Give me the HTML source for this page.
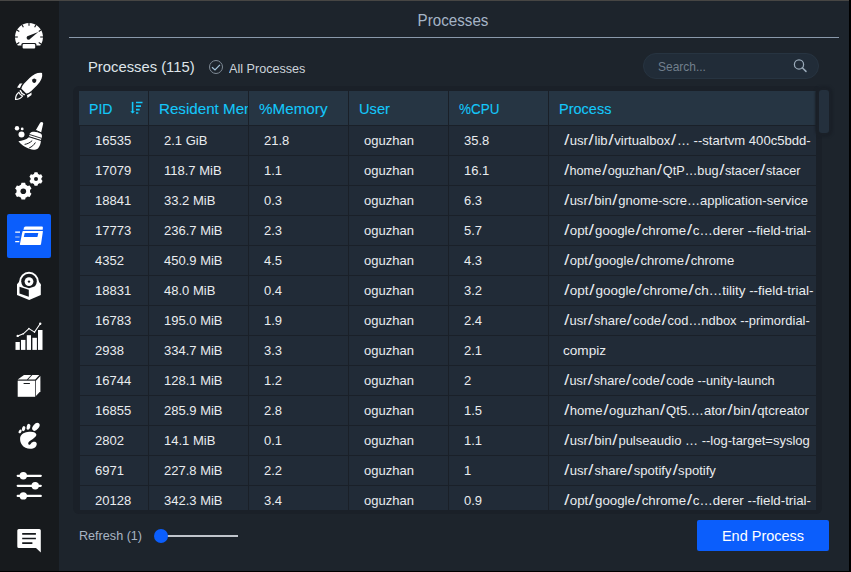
<!DOCTYPE html>
<html><head><meta charset="utf-8">
<style>
html,body{margin:0;padding:0;}
body{width:851px;height:572px;position:relative;overflow:hidden;background:#000;font-family:"Liberation Sans",sans-serif;}
.a{position:absolute;}
#topb{left:0;top:0;width:849px;height:1px;background:#474644;}
#side{left:0;top:1px;width:59px;height:570px;background:#171a1d;}
#main{left:59px;top:1px;width:790px;height:570px;background:#1d242c;}
#title{left:358px;top:11px;width:190px;text-align:center;color:#a5b4c6;font-size:17px;line-height:20px;transform:scaleX(0.892);}
#hline{left:69px;top:37px;width:770px;height:1px;background:#8a99ab;}
#plabel{left:88px;top:58px;color:#dfe5ea;font-size:14.8px;line-height:18px;white-space:nowrap;transform-origin:0 0;}
#chk{left:209px;top:60px;width:12px;height:12px;border:1px solid #7f8a95;border-radius:50%;}
#alltxt{left:229px;top:61px;color:#ccd3da;font-size:13px;line-height:16px;white-space:nowrap;transform:scaleX(0.97);transform-origin:0 0;}
#search{left:643px;top:53px;width:174px;height:24px;border:1px solid #273441;border-radius:13px;background:#212c38;}
#stxt{left:658px;top:59px;color:#717f8d;font-size:13.3px;line-height:16px;transform:scaleX(0.9);transform-origin:0 0;}
#frame{left:73px;top:86px;width:749px;height:428px;border-radius:6px;background:#1a2028;}
.hc{position:absolute;top:91px;height:34px;background:#263543;overflow:hidden;}
.hc span{position:absolute;left:10px;top:9px;font-size:14.5px;line-height:18px;color:#14c8fa;white-space:nowrap;-webkit-text-stroke:0.1px #14c8fa;}
.rc{position:absolute;background:#212b37;overflow:hidden;}
.rc span{position:absolute;left:15px;top:6px;font-size:13px;line-height:17px;color:#e9ecef;white-space:nowrap;}
.rc i.sl{font-style:normal;margin:0 1.5px;display:inline-block;transform:scale(1.4,1.15);transform-origin:50% 62%;}
#sbh{left:819px;top:90px;width:10px;height:43px;border-radius:3px;background:#24303d;box-shadow:0 0 2px 4px #1a2028;}
#rtxt{left:79px;top:527px;color:#a9b5c3;font-size:13px;line-height:17px;white-space:nowrap;transform:scaleX(0.97);transform-origin:0 0;}
#track{left:161px;top:535px;width:77px;height:2px;background:#c0c5cc;}
#knob{left:154px;top:529px;width:14px;height:14px;border-radius:50%;background:#0b5efc;}
#btn{left:697px;top:520px;width:132px;height:31px;border-radius:2px;background:#0b5efc;color:#fff;font-size:14.5px;line-height:33px;text-align:center;}
</style></head><body>
<div class="a" id="topb"></div>
<div class="a" id="side"></div>
<div class="a" id="main"></div>
<div class="a" id="title">Processes</div>
<div class="a" id="hline"></div>
<div class="a" id="plabel">Processes (115)</div>
<div class="a" id="chk"></div>
<svg class="a" style="left:0;top:0" width="851" height="572" viewBox="0 0 851 572">
<path d="M212 67.2 L215 70 L219.9 64.9" fill="none" stroke="#a5c4da" stroke-width="1.2"/>
</svg>
<div class="a" id="alltxt">All Processes</div>
<div class="a" id="search"></div>
<div class="a" id="stxt">Search...</div>
<svg class="a" style="left:0;top:0" width="851" height="572" viewBox="0 0 851 572">
<circle cx="799" cy="64.4" r="4.6" fill="none" stroke="#9aaab9" stroke-width="1.25"/>
<path d="M802.3 67.7 L806 71.4" stroke="#9aaab9" stroke-width="1.5" stroke-linecap="round"/>
</svg>
<div class="a" id="frame"></div>
<div class="hc" style="left:79px;width:69px"><span style="transform:scaleX(0.97);transform-origin:0 0">PID</span></div>
<div class="hc" style="left:149px;width:99px"><span style="transform:scaleX(1.045);transform-origin:0 0">Resident Memory</span></div>
<div class="hc" style="left:249px;width:99px"><span style="transform:scaleX(1.05);transform-origin:0 0">%Memory</span></div>
<div class="hc" style="left:349px;width:99px"><span style="transform:scaleX(1.01);transform-origin:0 0">User</span></div>
<div class="hc" style="left:449px;width:99px"><span style="transform:scaleX(0.93);transform-origin:0 0">%CPU</span></div>
<div class="hc" style="left:549px;width:267px"><span style="transform:scaleX(1.0);transform-origin:0 0">Process</span></div>
<div class="rc" style="left:80px;top:126px;width:68px;height:29px"><span>16535</span></div>
<div class="rc" style="left:149px;top:126px;width:99px;height:29px"><span>2.1 GiB</span></div>
<div class="rc" style="left:249px;top:126px;width:99px;height:29px"><span>21.8</span></div>
<div class="rc" style="left:349px;top:126px;width:99px;height:29px"><span>oguzhan</span></div>
<div class="rc" style="left:449px;top:126px;width:99px;height:29px"><span>35.8</span></div>
<div class="rc" style="left:549px;top:126px;width:267px;height:29px"><span style="left:14px;transform:scaleX(1.0061);transform-origin:0 0"><i class="sl">/</i>usr<i class="sl">/</i>lib<i class="sl">/</i>virtualbox<i class="sl">/</i>… --startvm 400c5bdd-</span></div>
<div class="rc" style="left:80px;top:156px;width:68px;height:29px"><span>17079</span></div>
<div class="rc" style="left:149px;top:156px;width:99px;height:29px"><span>118.7 MiB</span></div>
<div class="rc" style="left:249px;top:156px;width:99px;height:29px"><span>1.1</span></div>
<div class="rc" style="left:349px;top:156px;width:99px;height:29px"><span>oguzhan</span></div>
<div class="rc" style="left:449px;top:156px;width:99px;height:29px"><span>16.1</span></div>
<div class="rc" style="left:549px;top:156px;width:267px;height:29px"><span style="left:14px;transform:scaleX(0.9757);transform-origin:0 0"><i class="sl">/</i>home<i class="sl">/</i>oguzhan<i class="sl">/</i>QtP…bug<i class="sl">/</i>stacer<i class="sl">/</i>stacer</span></div>
<div class="rc" style="left:80px;top:186px;width:68px;height:29px"><span>18841</span></div>
<div class="rc" style="left:149px;top:186px;width:99px;height:29px"><span>33.2 MiB</span></div>
<div class="rc" style="left:249px;top:186px;width:99px;height:29px"><span>0.3</span></div>
<div class="rc" style="left:349px;top:186px;width:99px;height:29px"><span>oguzhan</span></div>
<div class="rc" style="left:449px;top:186px;width:99px;height:29px"><span>6.3</span></div>
<div class="rc" style="left:549px;top:186px;width:267px;height:29px"><span style="left:14px;transform:scaleX(1.0012);transform-origin:0 0"><i class="sl">/</i>usr<i class="sl">/</i>bin<i class="sl">/</i>gnome-scre…application-service</span></div>
<div class="rc" style="left:80px;top:216px;width:68px;height:29px"><span>17773</span></div>
<div class="rc" style="left:149px;top:216px;width:99px;height:29px"><span>236.7 MiB</span></div>
<div class="rc" style="left:249px;top:216px;width:99px;height:29px"><span>2.3</span></div>
<div class="rc" style="left:349px;top:216px;width:99px;height:29px"><span>oguzhan</span></div>
<div class="rc" style="left:449px;top:216px;width:99px;height:29px"><span>5.7</span></div>
<div class="rc" style="left:549px;top:216px;width:267px;height:29px"><span style="left:14px;transform:scaleX(1.0224);transform-origin:0 0"><i class="sl">/</i>opt<i class="sl">/</i>google<i class="sl">/</i>chrome<i class="sl">/</i>c…derer --field-trial-</span></div>
<div class="rc" style="left:80px;top:246px;width:68px;height:29px"><span>4352</span></div>
<div class="rc" style="left:149px;top:246px;width:99px;height:29px"><span>450.9 MiB</span></div>
<div class="rc" style="left:249px;top:246px;width:99px;height:29px"><span>4.5</span></div>
<div class="rc" style="left:349px;top:246px;width:99px;height:29px"><span>oguzhan</span></div>
<div class="rc" style="left:449px;top:246px;width:99px;height:29px"><span>4.3</span></div>
<div class="rc" style="left:549px;top:246px;width:267px;height:29px"><span style="left:14px;transform:scaleX(1.0053);transform-origin:0 0"><i class="sl">/</i>opt<i class="sl">/</i>google<i class="sl">/</i>chrome<i class="sl">/</i>chrome</span></div>
<div class="rc" style="left:80px;top:276px;width:68px;height:29px"><span>18831</span></div>
<div class="rc" style="left:149px;top:276px;width:99px;height:29px"><span>48.0 MiB</span></div>
<div class="rc" style="left:249px;top:276px;width:99px;height:29px"><span>0.4</span></div>
<div class="rc" style="left:349px;top:276px;width:99px;height:29px"><span>oguzhan</span></div>
<div class="rc" style="left:449px;top:276px;width:99px;height:29px"><span>3.2</span></div>
<div class="rc" style="left:549px;top:276px;width:267px;height:29px"><span style="left:14px;transform:scaleX(1.0357);transform-origin:0 0"><i class="sl">/</i>opt<i class="sl">/</i>google<i class="sl">/</i>chrome<i class="sl">/</i>ch…tility --field-trial-</span></div>
<div class="rc" style="left:80px;top:306px;width:68px;height:29px"><span>16783</span></div>
<div class="rc" style="left:149px;top:306px;width:99px;height:29px"><span>195.0 MiB</span></div>
<div class="rc" style="left:249px;top:306px;width:99px;height:29px"><span>1.9</span></div>
<div class="rc" style="left:349px;top:306px;width:99px;height:29px"><span>oguzhan</span></div>
<div class="rc" style="left:449px;top:306px;width:99px;height:29px"><span>2.4</span></div>
<div class="rc" style="left:549px;top:306px;width:267px;height:29px"><span style="left:14px;transform:scaleX(0.9935);transform-origin:0 0"><i class="sl">/</i>usr<i class="sl">/</i>share<i class="sl">/</i>code<i class="sl">/</i>cod…ndbox --primordial-</span></div>
<div class="rc" style="left:80px;top:336px;width:68px;height:29px"><span>2938</span></div>
<div class="rc" style="left:149px;top:336px;width:99px;height:29px"><span>334.7 MiB</span></div>
<div class="rc" style="left:249px;top:336px;width:99px;height:29px"><span>3.3</span></div>
<div class="rc" style="left:349px;top:336px;width:99px;height:29px"><span>oguzhan</span></div>
<div class="rc" style="left:449px;top:336px;width:99px;height:29px"><span>2.1</span></div>
<div class="rc" style="left:549px;top:336px;width:267px;height:29px"><span style="left:14px;transform:scaleX(1.0450);transform-origin:0 0">compiz</span></div>
<div class="rc" style="left:80px;top:366px;width:68px;height:29px"><span>16744</span></div>
<div class="rc" style="left:149px;top:366px;width:99px;height:29px"><span>128.1 MiB</span></div>
<div class="rc" style="left:249px;top:366px;width:99px;height:29px"><span>1.2</span></div>
<div class="rc" style="left:349px;top:366px;width:99px;height:29px"><span>oguzhan</span></div>
<div class="rc" style="left:449px;top:366px;width:99px;height:29px"><span>2</span></div>
<div class="rc" style="left:549px;top:366px;width:267px;height:29px"><span style="left:14px;transform:scaleX(0.9808);transform-origin:0 0"><i class="sl">/</i>usr<i class="sl">/</i>share<i class="sl">/</i>code<i class="sl">/</i>code --unity-launch</span></div>
<div class="rc" style="left:80px;top:396px;width:68px;height:29px"><span>16855</span></div>
<div class="rc" style="left:149px;top:396px;width:99px;height:29px"><span>285.9 MiB</span></div>
<div class="rc" style="left:249px;top:396px;width:99px;height:29px"><span>2.8</span></div>
<div class="rc" style="left:349px;top:396px;width:99px;height:29px"><span>oguzhan</span></div>
<div class="rc" style="left:449px;top:396px;width:99px;height:29px"><span>1.5</span></div>
<div class="rc" style="left:549px;top:396px;width:267px;height:29px"><span style="left:14px;transform:scaleX(1.0074);transform-origin:0 0"><i class="sl">/</i>home<i class="sl">/</i>oguzhan<i class="sl">/</i>Qt5.…ator<i class="sl">/</i>bin<i class="sl">/</i>qtcreator</span></div>
<div class="rc" style="left:80px;top:426px;width:68px;height:29px"><span>2802</span></div>
<div class="rc" style="left:149px;top:426px;width:99px;height:29px"><span>14.1 MiB</span></div>
<div class="rc" style="left:249px;top:426px;width:99px;height:29px"><span>0.1</span></div>
<div class="rc" style="left:349px;top:426px;width:99px;height:29px"><span>oguzhan</span></div>
<div class="rc" style="left:449px;top:426px;width:99px;height:29px"><span>1.1</span></div>
<div class="rc" style="left:549px;top:426px;width:267px;height:29px"><span style="left:14px;transform:scaleX(1.0016);transform-origin:0 0"><i class="sl">/</i>usr<i class="sl">/</i>bin<i class="sl">/</i>pulseaudio … --log-target=syslog</span></div>
<div class="rc" style="left:80px;top:456px;width:68px;height:29px"><span>6971</span></div>
<div class="rc" style="left:149px;top:456px;width:99px;height:29px"><span>227.8 MiB</span></div>
<div class="rc" style="left:249px;top:456px;width:99px;height:29px"><span>2.2</span></div>
<div class="rc" style="left:349px;top:456px;width:99px;height:29px"><span>oguzhan</span></div>
<div class="rc" style="left:449px;top:456px;width:99px;height:29px"><span>1</span></div>
<div class="rc" style="left:549px;top:456px;width:267px;height:29px"><span style="left:14px;transform:scaleX(1.0039);transform-origin:0 0"><i class="sl">/</i>usr<i class="sl">/</i>share<i class="sl">/</i>spotify<i class="sl">/</i>spotify</span></div>
<div class="rc" style="left:80px;top:486px;width:68px;height:24px"><span>20128</span></div>
<div class="rc" style="left:149px;top:486px;width:99px;height:24px"><span>342.3 MiB</span></div>
<div class="rc" style="left:249px;top:486px;width:99px;height:24px"><span>3.4</span></div>
<div class="rc" style="left:349px;top:486px;width:99px;height:24px"><span>oguzhan</span></div>
<div class="rc" style="left:449px;top:486px;width:99px;height:24px"><span>0.9</span></div>
<div class="rc" style="left:549px;top:486px;width:267px;height:24px"><span style="left:14px;transform:scaleX(1.0224);transform-origin:0 0"><i class="sl">/</i>opt<i class="sl">/</i>google<i class="sl">/</i>chrome<i class="sl">/</i>c…derer --field-trial-</span></div>
<svg class="a" style="left:124px;top:96px" width="24" height="24" viewBox="0 0 24 24">
<path d="M8.6 5.9 V16.5" stroke="#14c8fa" stroke-width="1.6"/>
<path d="M6.3 15.2 L8.6 17.6 L10.9 15.2 Z" fill="#14c8fa"/>
<path d="M12 6.5 H18.5 M12 10.1 H17 M12 13.6 H15.7 M12 17 H14.3" stroke="#14c8fa" stroke-width="1.6"/>
</svg>
<div class="a" id="sbh"></div>
<div class="a" id="rtxt">Refresh (1)</div>
<div class="a" id="track"></div>
<div class="a" id="knob"></div>
<div class="a" id="btn">End Process</div>

<svg class="a" style="left:0;top:0" width="59" height="572" viewBox="0 0 59 572">
<g fill="#fff">
<!-- gauge -->
<path d="M17.8 45.4 A14 14 0 1 1 40.2 45.4 Z"/>
<g stroke="#171a1d" stroke-width="1.1">
<path d="M29 23 V25.8"/>
<path d="M22 24.9 L23.4 27.3"/><path d="M36 24.9 L34.6 27.3"/>
<path d="M16.9 30 L19.3 31.4"/><path d="M41.1 30 L38.7 31.4"/>
<path d="M15 37 H17.8"/><path d="M43 37 H40.2"/>
<path d="M16.9 44 L19.3 42.6"/><path d="M41.1 44 L38.7 42.6"/>
</g>
<path d="M27.3 36.3 L38.3 32.1 L29.6 39.2 Z" fill="#171a1d"/>
<circle cx="28.5" cy="37.8" r="1.9" fill="#171a1d"/>
<rect x="21.4" y="43" width="15" height="6.6" rx="1.5" fill="#171a1d"/>
<rect x="22.6" y="44.1" width="12.6" height="4.3" rx="1"/>
<!-- rocket -->
<path d="M17 87.4 L19.8 83.4 L22.8 83.4 L20 88 Z"/>
<path d="M27.5 97.9 L31.5 95.1 L31.5 92.1 L26.9 94.9 Z"/>
<g transform="translate(29 86) rotate(45)">
<path d="M0 -19.4 C3 -17.5 5.8 -13 5.9 -6 L5.9 2 Q5.8 5 4 8 L-4 8 Q-5.8 5 -5.9 2 L-5.9 -6 C-5.8 -13 -3 -17.5 0 -19.4 Z" stroke="#171a1d" stroke-width="1.4"/>
<circle cx="0" cy="-7.4" r="2.1" fill="#171a1d"/>
<path d="M-3.3 9.3 Q0 10.9 3.3 9.3" stroke="#fff" stroke-width="1.4" fill="none"/>
<path d="M-2.6 11.6 C-3.2 14.5 -1.5 17.5 0 19 C1.5 17.5 3.2 14.5 2.6 11.6 Q0 12.9 -2.6 11.6 Z" fill="#171a1d" stroke="#fff" stroke-width="1.2"/>
</g>
<!-- broom -->
<circle cx="21.5" cy="134.5" r="3"/>
<circle cx="17" cy="128.2" r="2.2"/>
<circle cx="22.2" cy="128.9" r="1.4"/>
<path d="M40.3 122.6 Q41.6 121.3 42.9 122.5 Q43.4 123.2 43.1 124.1 L41.1 132.8 L35.6 130.4 Z"/>
<path d="M29.2 136.6 C29.1 134.2 30 132.8 31.6 132.1 C34 131.1 38 131.8 40.8 133.6 C41.9 134.5 42.3 136 41.8 137.5 L40.9 140.3 Z"/>
<path d="M35.3 130.2 L41.5 132.9" stroke="#171a1d" stroke-width="1"/>
<path d="M29.2 134.4 L41.8 138.4 M28.9 136.7 L41.2 140.5" stroke="#171a1d" stroke-width="0.9"/>
<path d="M28.9 137.2 L40.9 141 C40.7 143.8 39.8 146.2 38 148.4 C36 149.9 33 150.1 30 149.1 C26.5 147.9 23 145.6 20.5 143.4 C19.6 142.6 18.9 141.9 18.4 141.2 C22 140.9 26 139.7 28.9 137.2 Z"/>
<path d="M32.2 140.6 C30.2 142.6 27.6 143.9 24.6 144.4 M35.4 142.5 C33.9 145 31.8 146.9 29.2 147.9" stroke="#171a1d" stroke-width="1" fill="none"/>
<!-- gears -->
<path d="M20.90 184.84L21.50 182.79L25.10 182.79L25.70 184.84A6.8 6.8 0 0 1 27.61 185.94L27.61 185.94L29.68 185.44L31.48 188.55L30.01 190.10A6.8 6.8 0 0 1 30.01 192.30L30.01 192.30L31.48 193.85L29.68 196.96L27.61 196.46A6.8 6.8 0 0 1 25.70 197.56L25.70 197.56L25.10 199.61L21.50 199.61L20.90 197.56A6.8 6.8 0 0 1 18.99 196.46L18.99 196.46L16.92 196.96L15.12 193.85L16.59 192.30A6.8 6.8 0 0 1 16.59 190.10L16.59 190.10L15.12 188.55L16.92 185.44L18.99 185.94A6.8 6.8 0 0 1 20.90 184.84Z" fill-rule="evenodd"/>
<circle cx="23.3" cy="191.2" r="2.8" fill="#171a1d"/>
<path d="M33.95 173.90L34.55 172.15L37.45 172.15L38.05 173.90A5.4 5.4 0 0 1 39.30 174.63L39.30 174.63L41.12 174.27L42.57 176.78L41.35 178.18A5.4 5.4 0 0 1 41.35 179.62L41.35 179.62L42.57 181.02L41.12 183.53L39.30 183.17A5.4 5.4 0 0 1 38.05 183.90L38.05 183.90L37.45 185.65L34.55 185.65L33.95 183.90A5.4 5.4 0 0 1 32.70 183.17L32.70 183.17L30.88 183.53L29.43 181.02L30.65 179.62A5.4 5.4 0 0 1 30.65 178.18L30.65 178.18L29.43 176.78L30.88 174.27L32.70 174.63A5.4 5.4 0 0 1 33.95 173.90Z"/>
<circle cx="36" cy="178.9" r="2.0" fill="#171a1d"/>
<!-- processes active -->
<rect x="7" y="214" width="44" height="44" rx="2" fill="#0b5efc"/>
<path d="M23.4 229.8 L24.1 227.6 Q24.5 226.5 25.9 226.5 L41.8 226.5 Q43 226.5 42.9 227.8 L42.7 229.8 Z"/>
<path d="M23.2 231.1 L42.6 231.1 Q43 231.1 42.9 231.6 L41 244.2 Q40.9 245 40 245 L20.6 245 Q19.8 245 19.9 244.2 L22.4 231.8 Q22.5 231.1 23.2 231.1 Z"/>
<path d="M24.7 233.1 L38.3 233.1 L37.4 237 L23.8 237 Z" fill="#0b5efc"/>
<path d="M15.2 232.2 H20 M15.2 241.7 H19.3" stroke="#fff" stroke-width="1.2"/>
<path d="M15.2 237 H19.6" stroke="#9dbcf0" stroke-width="1.2"/>
<!-- uninstaller -->
<circle cx="29" cy="281.6" r="9.8"/>
<path d="M17 286 L17 284.6 Q17.2 283.5 18.2 282.9 L20.5 279.5 L29 282 L37.5 279.5 L39.8 282.9 Q40.8 283.5 40.8 284.6 L40.8 286 Z"/>
<circle cx="29" cy="281.6" r="7.8" fill="#171a1d"/>
<circle cx="29" cy="281.6" r="4.4"/>
<circle cx="29" cy="281.6" r="1.2" fill="#171a1d"/>
<path d="M17 284.6 L29 288.2 L40.8 284.6 L40.8 295 L29.2 299.9 L17 295 Z"/>
<path d="M19.5 286.8 L28.8 289.7 L28.8 296.8 L19.5 293.5 Z" fill="#171a1d"/>
<!-- chart -->
<rect x="15.5" y="342" width="4.3" height="7.9"/>
<rect x="21" y="339.9" width="4.4" height="10"/>
<rect x="26.8" y="335.2" width="4.2" height="14.7"/>
<rect x="32.4" y="337.8" width="4.5" height="12.1"/>
<rect x="38" y="330" width="4.5" height="19.9"/>
<path d="M17.7 335.9 L23.3 333.8 L28.9 328.6 L34.5 332.1 L40.2 323.8" fill="none" stroke="#fff" stroke-width="1.1"/>
<circle cx="17.7" cy="335.9" r="1.2"/><circle cx="23.3" cy="333.8" r="0.8"/><circle cx="28.9" cy="328.6" r="0.8"/><circle cx="34.5" cy="332.1" r="0.8"/><circle cx="40.2" cy="323.8" r="1.2"/>
<!-- box -->
<rect x="17.7" y="380.7" width="17.5" height="16.1"/>
<path d="M17.7 379.6 L24 375 L31.2 375 L27 379.6 Z"/>
<path d="M28.1 379.6 L32.3 375 L39.4 375 L35.2 379.6 Z"/>
<path d="M35.9 380.7 L40.4 376.1 L40.4 391.2 L35.9 396 Z"/>
<path d="M23.6 383.5 H29.9" stroke="#171a1d" stroke-width="1"/>
<!-- gnome foot -->
<ellipse cx="35.9" cy="426.8" rx="4.6" ry="2.8" transform="rotate(-50 35.9 426.8)"/>
<ellipse cx="28.5" cy="426.8" rx="1.8" ry="3" transform="rotate(15 28.5 426.8)"/>
<ellipse cx="23.6" cy="428.6" rx="1.6" ry="2.6" transform="rotate(20 23.6 428.6)"/>
<ellipse cx="20.1" cy="431.4" rx="1.3" ry="2.1" transform="rotate(35 20.1 431.4)"/>
<g transform="translate(10 416)">
<path d="M17.5 16.1 C21 15.4 25 15.5 26.3 18.3 C26.8 20 24 22.5 20.5 24.5 C18.5 25.8 17.6 27.5 18.6 28.5 C19.6 29.3 20.6 28.3 21.2 27.2 C22 25.8 24.5 25.2 26 26.2 C27.4 27.3 26.8 30.2 25 31.5 C22.8 33.2 18.5 33.3 15.5 31.8 C12 30 10 26.5 10.1 22.5 C10.2 19 13.5 16.7 17.5 16.1 Z"/>
</g>
<!-- sliders -->
<path d="M17.7 475.8 H40.8 M17.7 485.8 H40.8 M17.7 495.9 H40.8" stroke="#fff" stroke-width="2.2" stroke-linecap="round"/>
<circle cx="23.3" cy="475.8" r="3.7"/><circle cx="35.2" cy="485.8" r="3.7"/><circle cx="23.3" cy="495.9" r="3.7"/>
<!-- chat -->
<path d="M18.8 529.1 L39.3 529.1 Q40.8 529.1 40.8 530.6 L40.8 552.5 L36 548 L18.8 548 Q17.3 548 17.3 546.5 L17.3 530.6 Q17.3 529.1 18.8 529.1 Z"/>
<path d="M22.2 533.8 H35.9 M22.2 538.5 H35.9 M22.2 543.1 H32.4" stroke="#171a1d" stroke-width="1.7"/>
</g>
</svg>
</body></html>
